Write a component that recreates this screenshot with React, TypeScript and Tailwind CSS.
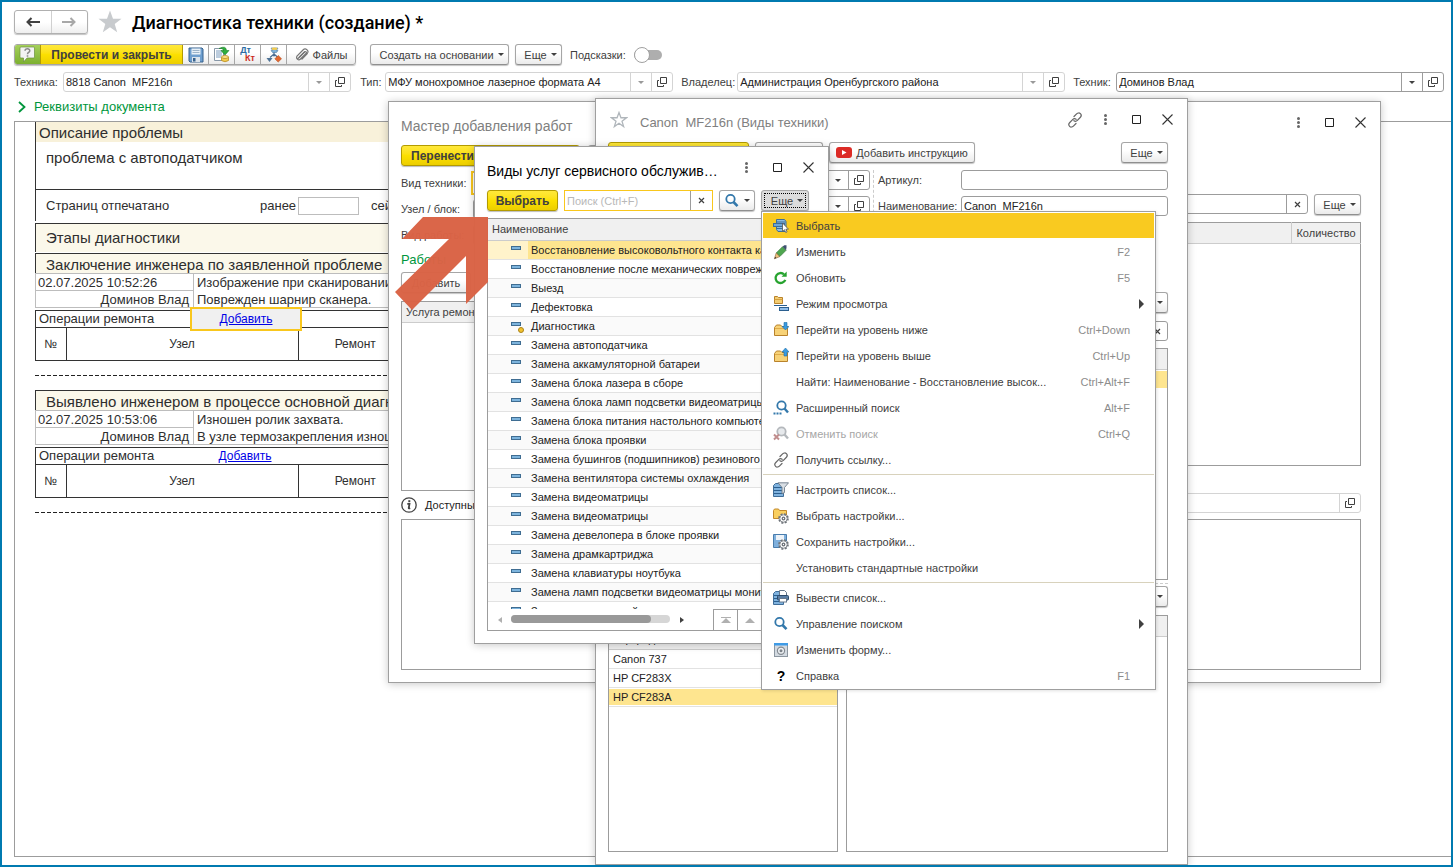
import type { ReactNode } from "react";

/* ---------- icons ---------- */

function OpenIcon() {
  return (
    <svg width="10" height="10" viewBox="0 0 10 10" fill="none" stroke="currentColor">
      <path d="M3.5 .5h6v6h-6z" />
      <path d="M2 3.5H.5v6h6V8" />
    </svg>
  );
}

function CaretIcon() {
  return (
    <svg width="6" height="3" viewBox="0 0 6 3" fill="currentColor">
      <path d="M0 0h6L3 3z" />
    </svg>
  );
}

function ClearIcon() {
  return (
    <svg width="7" height="7" viewBox="0 0 7 7" stroke="currentColor" strokeWidth="1.2">
      <path d="M1 1l5 5M6 1L1 6" />
    </svg>
  );
}

function CloseIcon() {
  return (
    <svg width="11" height="11" viewBox="0 0 11 11" stroke="#333" strokeWidth="1.1">
      <path d="M.5 .5l10 10M10.5 .5l-10 10" />
    </svg>
  );
}

function SquareIcon() {
  return (
    <svg width="10" height="10" viewBox="0 0 10 10" fill="none" stroke="#222">
      <path d="M.5 .5h8v8h-8z" />
    </svg>
  );
}

function DotsIcon() {
  return (
    <svg width="3" height="11" viewBox="0 0 3 11" fill="#666">
      <circle cx="1.5" cy="1.5" r="1.5" />
      <circle cx="1.5" cy="5.5" r="1.5" />
      <circle cx="1.5" cy="9.5" r="1.5" />
    </svg>
  );
}

function LinkIcon() {
  return (
    <svg width="16" height="16" viewBox="0 0 16 16" fill="none" stroke="#666" strokeWidth="1.2" strokeLinecap="round">
      <path d="M7 4.500l2.600-2.600c1.200-1.200 2.800-1.200 3.800-.2s1 2.600-.2 3.800L10.400 8.300c-1.100 1.100-2.400 1.200-3.500.4" />
      <path d="M9 11.500l-2.600 2.600c-1.200 1.200-2.800 1.200-3.800.2s-1-2.600.2-3.800L5.600 7.700c1.100-1.100 2.400-1.200 3.500-.4" />
    </svg>
  );
}

function SearchIcon() {
  return (
    <svg width="16" height="16" viewBox="0 0 16 16" fill="none" stroke="#3378ab">
      <circle cx="6.5" cy="6" r="4.2" strokeWidth="1.8" />
      <path d="M9.500 9l4 4.200" strokeWidth="2.600" />
    </svg>
  );
}

function AdvancedSearchIcon() {
  return (
    <svg width="16" height="16" viewBox="0 0 16 16" fill="none" stroke="#3378ab">
      <circle cx="8.500" cy="5.500" r="4.200" strokeWidth="1.800" />
      <path d="M11.500 8.500l3.500 4" strokeWidth="2.400" />
      <path d="M.5 13.500h8" strokeWidth="2" strokeDasharray="2 1" />
    </svg>
  );
}

function CancelSearchIcon() {
  return (
    <svg width="16" height="16" viewBox="0 0 16 16" fill="none" stroke="#b4b8bc">
      <circle cx="8.500" cy="5.500" r="4.200" strokeWidth="1.800" fill="#e6e9ec" />
      <path d="M11.500 8.500l3.500 4" strokeWidth="2.400" />
      <path d="M1 8.500l5 5M6 8.500l-5 5" stroke="#c08d8d" strokeWidth="2" />
    </svg>
  );
}

function ListLines() {
  return (
    <>
      <path d="M.5 3.500l2-2h8v13H.5z" fill="#7fb2de" stroke="#3f6d98" />
      <path d="M1 5.500h9M1 8.500h9M1 11.500h9" stroke="#2b5f8f" fill="none" />
    </>
  );
}

function SelectIcon() {
  return (
    <svg width="16" height="16" viewBox="0 0 16 16">
      <path d="M3.500 1.500h8l1.500 2v10H5l-1.500-2z" fill="#8dbbe2" stroke="#3d6d98" />
      <path d="M3.500 4h9M3.500 10.500h9" stroke="#3d6d98" />
      <rect x=".5" y="5.500" width="11" height="3" fill="#6ea6d8" stroke="#3d6d98" />
      <path d="M9.500 5v8.500l2-1.800 1.200 2.800 1.400-.6-1.200-2.700h2.600z" fill="#fff" stroke="#555" strokeWidth=".8" />
    </svg>
  );
}

function PencilIcon() {
  return (
    <svg width="16" height="16" viewBox="0 0 16 16">
      <path d="M3.200 9L9.500 2.700l3.600 3.600L6.800 12.600z" fill="#4fa64f" stroke="#2f6f35" strokeWidth=".6" />
      <path d="M9.500 2.700l1.800-1.500h2.200v2.300l-.4 2.800z" fill="#3f5170" />
      <path d="M3.200 9l3.600 3.600L1.400 14.800z" fill="#edc07c" stroke="#8a6232" strokeWidth=".6" />
      <path d="M1.400 14.800l.8-2 1.200 1.200z" fill="#333" />
    </svg>
  );
}

function RefreshIcon() {
  return (
    <svg width="16" height="16" viewBox="0 0 16 16" fill="none">
      <path d="M12.300 9.800a5 5 0 1 1-1.300-5.500" stroke="#27a32f" strokeWidth="2.300" />
      <path d="M13.700 1.500v5.200H8.500z" fill="#27a32f" />
    </svg>
  );
}

function ViewModeIcon() {
  return (
    <svg width="16" height="16" viewBox="0 0 16 16">
      <path d="M1.500 .5h3l1 1h4v6h-8z" fill="#f3cd72" stroke="#b9822b" />
      <path d="M1.500 3.500h8" stroke="#d6a040" />
      <path d="M1 9.500h13" stroke="#2b5f8f" />
      <rect x="6.500" y="11.500" width="9" height="3" fill="#8fbdea" stroke="#2b5f8f" />
    </svg>
  );
}

function LevelIcon({ up = false }: { up?: boolean }) {
  return (
    <svg width="16" height="16" viewBox="0 0 16 16">
      <path d="M1.500 5.500l2-2.500h4l1.500 1.500h5.500v9h-13z" fill="#f7d277" stroke="#b9822b" />
      <path d="M2 6.500h12" stroke="#e0ac4a" />
      {up ? (
        <path d="M12.500 0l3.500 4h-2v4h-3V4H9z" fill="#3b9be0" stroke="#1f6ea8" strokeWidth=".6" />
      ) : (
        <path d="M12.500 8L9 4.500h2V.5h3v4h2z" fill="#3b9be0" stroke="#1f6ea8" strokeWidth=".6" />
      )}
    </svg>
  );
}

function FilterIcon() {
  return (
    <svg width="16" height="16" viewBox="0 0 16 16">
      <ListLines />
      <path d="M5 .8h10.500l-4 4.700v5l-2.500 1.200V5.500z" fill="#d8dee4" stroke="#6f7d8a" strokeWidth=".9" />
    </svg>
  );
}

function Gear() {
  return (
    <g fill="#fff" stroke="#6d7278">
      <circle cx="10.500" cy="10.500" r="4.400" strokeWidth="1.800" strokeDasharray="2 1.450" />
      <circle cx="10.500" cy="10.500" r="3.700" strokeWidth=".8" />
      <circle cx="10.500" cy="10.500" r="1.300" strokeWidth="1.300" />
    </g>
  );
}

function ChooseSettingsIcon() {
  return (
    <svg width="16" height="16" viewBox="0 0 16 16">
      <path d="M.5 2.500l1-1.500h4l1 1.500h7v8H.5z" fill="#f9cf5f" stroke="#c3892a" />
      <Gear />
    </svg>
  );
}

function SaveSettingsIcon() {
  return (
    <svg width="16" height="16" viewBox="0 0 16 16">
      <path d="M.5 .5h13v13H.5z" fill="#7fb0dd" stroke="#4a7dad" />
      <path d="M3 1h8v5H3z" fill="#eef3f8" />
      <Gear />
    </svg>
  );
}

function PrintListIcon() {
  return (
    <svg width="16" height="16" viewBox="0 0 16 16">
      <ListLines />
      <path d="M6.500 .5h5l2 2v4h-7z" fill="#fff" stroke="#66788c" />
      <rect x="4.500" y="5.500" width="11" height="4.500" rx="1" fill="#5b7fa6" stroke="#2c4a6b" />
      <rect x="6.500" y="8.500" width="7" height="3.500" fill="#fff" stroke="#66788c" />
    </svg>
  );
}

function EditFormIcon() {
  return (
    <svg width="16" height="16" viewBox="0 0 16 16">
      <rect x="1.500" y="1.500" width="13" height="13" fill="#d3dae1" stroke="#8c96a0" />
      <path d="M1 1h14v2.500H1z" fill="#3f9be6" />
      <circle cx="8" cy="8.800" r="3.600" fill="#eef1f4" stroke="#848b92" strokeWidth="1.200" />
      <circle cx="8" cy="8.800" r="1.500" fill="#7b8289" />
    </svg>
  );
}

function HelpIcon() {
  return (
    <svg width="17" height="17" viewBox="0 0 17 17">
      <path d="M2 1h12.500q1 0 1 1v9q0 1-1 1H8l-3.500 4V12H2q-1 0-1-1V2q0-1 1-1z" fill="#f3f3f3" stroke="#6c8f3d" strokeWidth=".7" />
      <path d="M6 4.800c.2-2.600 5-2.600 4.800.1-.1 1.600-2.300 1.600-2.300 3.300" fill="none" stroke="#8a8a8a" strokeWidth="1.500" />
      <path d="M7.700 9.200h1.600v1.500H7.700z" fill="#8a8a8a" />
    </svg>
  );
}

function FloppyIcon() {
  return (
    <svg width="16" height="16" viewBox="0 0 16 16">
      <path d="M1 1h13l1 1v13H2l-1-1z" fill="#6f9fcf" stroke="#37618c" />
      <path d="M3.500 1.500h9v6h-9z" fill="#e9f1f8" />
      <path d="M4.500 3.500h7M4.500 5.500h7" stroke="#9db4ca" />
      <path d="M4 10h8v5H4z" fill="#dce4ec" />
      <path d="M5 11h2.500v3.500H5z" fill="#37618c" />
    </svg>
  );
}

function PostIcon() {
  return (
    <svg width="17" height="17" viewBox="0 0 17 17">
      <path d="M1.500 2.500h9v12h-9z" fill="#fff" stroke="#8898a8" />
      <path d="M3 5h6M3 7h6M3 9h6M3 11h5" stroke="#7a9bbd" />
      <path d="M6 2.500q7-3.500 7.500 2h2.500l-4 4.500-4-4.500h2.500q-.5-3-4.500-2z" fill="#2fae3c" stroke="#1c7d28" strokeWidth=".6" />
      <path d="M8.500 11v3.500q3.500 2.500 7 0V11" fill="#f3cb4e" stroke="#b98c22" strokeWidth=".8" />
      <ellipse cx="12" cy="11" rx="3.500" ry="1.500" fill="#fbe18a" stroke="#b98c22" strokeWidth=".8" />
    </svg>
  );
}

function StructureIcon() {
  return (
    <svg width="16" height="16" viewBox="0 0 16 16">
      <path d="M8 5v4.500M8 7l-4 3.500M8 7l4 3.500" stroke="#4d6f94" strokeWidth="1.200" fill="none" />
      <path d="M5 1h7l-1.500 2.500H12l-1.500 2h-4L5 3.500h1.500z" fill="#7eb1da" stroke="#4d7ba5" strokeWidth=".6" />
      <ellipse cx="8.500" cy="1.700" rx="3" ry="1.200" fill="#f3cb4e" />
      <path d="M.5 11h6L3.500 15z" fill="#4f7396" />
      <path d="M12.200 8.500l3.300 3.300-3.300 3.300-3.300-3.300z" fill="#e2672f" stroke="#b2481a" strokeWidth=".6" />
    </svg>
  );
}

function ClipIcon() {
  return (
    <svg width="14" height="14" viewBox="0 0 14 14" fill="none" stroke="#777" strokeWidth="1.200" strokeLinecap="round">
      <path d="M3 10.500l6.500-6.500c1.200-1.200 2.700.3 1.500 1.500L5.500 11c-1.800 1.800-5 0-3.500-3L8 2c2.500-2.500 6.500.5 4.300 3.500L7 11" />
      <path d="M4.500 9L9.500 4" />
    </svg>
  );
}

function StarShape({ filled = false }: { filled?: boolean }) {
  return filled ? (
    <svg width="24" height="24" viewBox="0 0 24 24" fill="#c8cbce">
      <path d="M12 .5l3 8.200h8.500l-6.800 5.200 2.500 8.400-7.200-5-7.200 5 2.500-8.400L.5 8.700H9z" />
    </svg>
  ) : (
    <svg width="18" height="18" viewBox="0 0 24 24" fill="none" stroke="#b0b6bb" strokeWidth="1.700">
      <path d="M12 2l2.600 7h7.400l-6 4.500 2.200 7.300-6.200-4.400-6.200 4.400 2.200-7.300L2 9h7.400z" />
    </svg>
  );
}

function ItemMark({ dotted = false }: { dotted?: boolean }) {
  return (
    <svg width="14" height="12" viewBox="0 0 14 12">
      <rect x=".5" y=".5" width="9" height="3" fill="#7db4dd" stroke="#3f6d92" />
      {dotted && <circle cx="10" cy="8" r="2.500" fill="#f2c22e" stroke="#a9831b" />}
    </svg>
  );
}

/* ---------- controls ---------- */

const plainButton =
  "flex h-[21px] shrink-0 items-center justify-center gap-1 rounded-[3px] border border-[#a6a6a6] border-b-[#8f8f8f] bg-linear-to-b from-white from-40% to-[#ebebeb] text-[#404040] shadow-[0_1px_1px_#c4c4c4] whitespace-nowrap";

const yellowButton =
  "flex h-[21px] shrink-0 items-center overflow-hidden rounded-[3px] border border-[#b39b00] bg-linear-to-b from-[#ffe83a] via-[#fce000] to-[#ecce00] text-xs font-bold text-[#404040] shadow-[0_1px_1px_#bdbdbd] whitespace-nowrap";

function MoreButton() {
  return (
    <button className={`${plainButton} w-[47px] pl-1`}>
      Еще <CaretIcon />
    </button>
  );
}

const fieldActions = {
  drop: { label: "Выбрать из списка", icon: <CaretIcon /> },
  open: { label: "Открыть", icon: <OpenIcon /> },
  clear: { label: "Очистить", icon: <ClearIcon /> },
};

type FieldProps = {
  id: string;
  value?: string;
  label?: string;
  actions?: (keyof typeof fieldActions)[];
  muted?: boolean;
  className?: string;
};

function Field({ id, value = "", label, actions = [], muted = false, className = "" }: FieldProps) {
  const line = muted ? "border-[#d4d4d4]" : "border-[#9c9c9c]";
  return (
    <div className={`flex h-5 min-w-0 rounded-[3px] border bg-white ${line} ${className}`}>
      <input
        id={id}
        aria-label={label}
        defaultValue={value}
        className="w-full min-w-0 flex-1 bg-transparent px-0.5 text-[#222] outline-none"
      />
      {actions.map((name) => (
        <button
          key={name}
          aria-label={fieldActions[name].label}
          className={`flex w-[21px] shrink-0 items-center justify-center border-l ${line} ${muted && name === "drop" ? "text-[#999]" : "text-[#404040]"}`}
        >
          {fieldActions[name].icon}
        </button>
      ))}
    </div>
  );
}

type WindowProps = {
  title: string;
  active?: boolean;
  star?: boolean;
  link?: boolean;
  className: string;
  children: ReactNode;
};

function Window({ title, active = false, star = false, link = false, className, children }: WindowProps) {
  return (
    <section className={`absolute flex flex-col border border-[#9f9f9f] bg-white shadow-[0_1px_8px_rgba(0,0,0,0.22)] ${className}`}>
      <header className="mb-0.5 flex h-[41px] shrink-0 items-center pr-1 pl-3">
        {star && (
          <button aria-label="В избранное" className="mr-3 ml-0.5 w-[18px]">
            <StarShape />
          </button>
        )}
        <h2
          className={`min-w-0 flex-1 pt-1.5 whitespace-pre ${star ? "text-[13px]" : "text-sm"} ${active ? "text-black" : "text-[#808080]"}`}
        >
          {title}
        </h2>
        {link && (
          <button aria-label="Получить ссылку" className="flex h-6 w-[31px] items-center justify-center">
            <LinkIcon />
          </button>
        )}
        <button aria-label="Меню окна" className="flex h-6 w-[31px] items-center justify-center">
          <DotsIcon />
        </button>
        <button aria-label="Развернуть" className="flex h-6 w-[31px] items-center justify-center">
          <SquareIcon />
        </button>
        <button aria-label="Закрыть" className="flex h-6 w-[31px] items-center justify-center">
          <CloseIcon />
        </button>
      </header>
      {children}
    </section>
  );
}

/* ---------- main form ---------- */

function TitleRow() {
  return (
    <div className="flex h-6 items-center">
      <div className="flex h-6 w-[74px] rounded-[3px] border border-[#b0b0b0] bg-linear-to-b from-white from-50% to-[#efefef] shadow-[0_1px_1px_#c4c4c4]">
        <button aria-label="Назад" className="flex flex-1 items-center justify-center border-r border-[#d0d0d0]">
          <svg width="14" height="10" viewBox="0 0 14 10" fill="none" stroke="#404040" strokeWidth="2">
            <path d="M14 5H2M5.500 1L1.500 5l4 4" />
          </svg>
        </button>
        <button aria-label="Вперед" className="flex flex-1 items-center justify-center">
          <svg width="14" height="10" viewBox="0 0 14 10" fill="none" stroke="#a8a8a8" strokeWidth="2">
            <path d="M0 5h12M8.500 1l4 4-4 4" />
          </svg>
        </button>
      </div>
      <button aria-label="В избранное" className="mr-2.5 ml-2.5">
        <StarShape filled />
      </button>
      <h1 className="pt-0.5 font-[Roboto,sans-serif] text-lg leading-5 font-medium text-black">Диагностика техники (создание) *</h1>
    </div>
  );
}

function Toolbar() {
  const iconButton = "flex w-[26px] items-center justify-center border-l border-[#a6a6a6]";
  return (
    <div className="mt-2.5 flex h-[21px] items-center">
      <div className="flex h-[21px] overflow-hidden rounded-[3px] border border-[#a6a6a6] bg-linear-to-b from-white from-40% to-[#ebebeb] text-[#404040] shadow-[0_1px_1px_#c4c4c4]">
        <button aria-label="Справка" className="flex w-[25px] items-center justify-center bg-linear-to-b from-[#a5d05a] to-[#7cb030]">
          <HelpIcon />
        </button>
        <button className="w-[143px] border border-y-0 border-[#b39b00] bg-linear-to-b from-[#ffe83a] via-[#fce000] to-[#ecce00] text-xs font-bold">
          Провести и закрыть
        </button>
        <button aria-label="Записать" className="flex w-[25px] items-center justify-center">
          <FloppyIcon />
        </button>
        <button aria-label="Провести" className={iconButton}>
          <PostIcon />
        </button>
        <button aria-label="Движения документа" className={`${iconButton} text-[9px] leading-[9px] font-bold`}>
          <span className="pb-2 text-[#2b6ca3]">Дт</span>
          <span className="-ml-1.5 pt-2 text-[#cc2a1e]">Кт</span>
        </button>
        <button aria-label="Структура подчиненности" className={iconButton}>
          <StructureIcon />
        </button>
        <button className="flex w-[69px] items-center justify-center gap-1 border-l border-[#a6a6a6]">
          <ClipIcon /> Файлы
        </button>
      </div>
      <button className={`${plainButton} ml-3.5 w-[139px] pl-1`}>
        Создать на основании <CaretIcon />
      </button>
      <div className="ml-1.5">
        <MoreButton />
      </div>
      <label htmlFor="hints" className="ml-2 text-[#404040]">
        Подсказки:
      </label>
      <span className="relative ml-2 flex h-4 w-7 items-center">
        <input id="hints" type="checkbox" role="switch" className="h-2.5 w-full appearance-none rounded-full bg-[#aeaeae]" />
        <span className="pointer-events-none absolute left-0 size-4 rounded-full border border-[#a0a0a0] bg-white" />
      </span>
    </div>
  );
}

function RequisiteRow() {
  return (
    <div className="mt-[7px] flex items-center pr-[7px] text-[#404040]">
      <label htmlFor="device" className="w-[49px] shrink-0">Техника:</label>
      <Field id="device" value="8818 Canon  MF216n" actions={["drop", "open"]} muted className="flex-[288]" />
      <label htmlFor="kind" className="ml-[9px] w-[25px] shrink-0">Тип:</label>
      <Field id="kind" value="МФУ монохромное лазерное формата А4" actions={["drop", "open"]} muted className="flex-[288]" />
      <label htmlFor="owner" className="ml-2 w-14 shrink-0">Владелец:</label>
      <Field id="owner" value="Администрация Оренбургского района" actions={["drop", "open"]} muted className="flex-[328]" />
      <label htmlFor="engineer" className="ml-2 w-[43px] shrink-0">Техник:</label>
      <Field id="engineer" value="Доминов Влад" actions={["drop", "open"]} className="flex-[328]" />
    </div>
  );
}

type Stage = { title: string; time: string; author: string; notes: string[]; focused?: boolean };

const stages: Stage[] = [
  {
    title: "Заключение инженера по заявленной проблеме",
    time: "02.07.2025 10:52:26",
    author: "Доминов Влад",
    notes: ["Изображение при сканировании", "Поврежден шарнир сканера."],
    focused: true,
  },
  {
    title: "Выявлено инженером в процессе основной диагностики",
    time: "02.07.2025 10:53:06",
    author: "Доминов Влад",
    notes: ["Изношен ролик захвата.", "В узле термозакрепления изношена пленка."],
  },
];

function StageBlock({ title, time, author, notes, focused = false }: Stage) {
  return (
    <div className="h-[137px]">
      <h3 className="h-5 border-t border-l border-[#333] bg-[#fbf8ea] pl-2.5 text-[15px] leading-[22px]">{title}</h3>
      <div className="flex h-[35px] border-y border-l border-[#bdbdbd] text-[13px]">
        <div className="w-[158px] border-r border-[#bdbdbd]">
          <p className="h-[17px] border-b border-[#bdbdbd] pl-0.5 leading-[17px]">{time}</p>
          <p className="pr-1 text-right leading-[17px]">{author}</p>
        </div>
        <div className="pl-[3px] leading-[17px]">
          {notes.map((note) => (
            <p key={note}>{note}</p>
          ))}
        </div>
      </div>
      <div className="mt-0.5 border border-[#333]">
        <div className="relative flex h-[17px] items-center border-b border-[#333] text-[13px]">
          <span className="w-[155px] pl-[3px]">Операции ремонта</span>
          <span
            className={
              focused
                ? "absolute -top-1 left-[154px] flex h-6 w-28 items-center justify-center border-2 border-[#f9c71d] bg-[#f0f0f0]"
                : "flex w-[108px] justify-center"
            }
          >
            <a href="#add" className="text-xs text-[#0000e6] underline">Добавить</a>
          </span>
        </div>
        <table className="w-full table-fixed text-xs">
          <thead>
            <tr className="h-8">
              <th className="w-[30px] border-r border-[#333] font-normal">№</th>
              <th className="w-[232px] border-r border-[#333] font-normal">Узел</th>
              <th className="w-[114px] font-normal">Ремонт</th>
              <th />
            </tr>
          </thead>
        </table>
      </div>
      <svg className="mt-3.5 h-px w-full" preserveAspectRatio="none">
        <path d="M0 .5h640" stroke="#222" strokeDasharray="4 2" />
      </svg>
    </div>
  );
}

function DocumentSheet() {
  return (
    <main className="flex-1 overflow-hidden border border-r-0 border-[#9c9c9c] pl-5 text-[#2e2e2e]">
      <div className="w-[620px]">
        <div className="border-l border-[#333]">
          <h3 className="h-5 bg-[#f8f1da] pl-[3px] text-[15px] leading-[21px]">Описание проблемы</h3>
          <p className="h-12 border-b border-[#333] pt-1.5 pl-2.5 text-[15px] leading-5">проблема с автоподатчиком</p>
          <div className="flex h-[31px] items-center pl-2.5 text-[13px]">
            <span className="w-[214px]">Страниц отпечатано</span>
            <label htmlFor="pages" className="w-[38px]">ранее</label>
            <input id="pages" className="h-[18px] w-[61px] border border-[#bdbdbd]" />
            <span className="pl-3">сейчас</span>
          </div>
        </div>
        <h3 className="mt-0.5 h-[29px] border-t border-l border-[#333] bg-[#fbf8ea] pl-2.5 text-[15px] leading-7">Этапы диагностики</h3>
        <div className="mt-px">
          {stages.map((stage) => (
            <StageBlock key={stage.title} {...stage} />
          ))}
        </div>
      </div>
    </main>
  );
}

/* ---------- windows ---------- */

function WorksWizard() {
  return (
    <Window title="Мастер добавления работ" className="top-[99px] left-[386px] h-[582px] w-[993px]">
      <div className="flex min-h-0 flex-1 flex-col pr-[19px] pb-3 pl-3">
        <div className="flex gap-2">
          <button className={`${yellowButton} w-[179px] pl-[9px]`}>Перенести в документ</button>
          <button className={`${plainButton} w-20`}>Закрыть</button>
        </div>
        <div className="grid h-[325px] grid-cols-2 gap-3">
          <div className="flex flex-col pt-1 text-[#404040]">
            <div className="flex h-[26px] items-center">
              <label htmlFor="work-device" className="w-[70px] shrink-0">Вид техники:</label>
              <input id="work-device" className="h-6 w-full border-2 border-[#f9c71d] outline-none" />
            </div>
            <div className="flex h-[26px] items-center">
              <label htmlFor="work-unit" className="w-[72px] shrink-0">Узел / блок:</label>
              <Field id="work-unit" actions={["drop"]} className="flex-1" />
            </div>
            <div className="flex h-[26px] items-center">
              <label htmlFor="work-type" className="w-[72px] shrink-0">Вид работы:</label>
              <Field id="work-type" actions={["drop"]} className="flex-1" />
            </div>
            <h3 className="h-6 pt-0.5 text-[13px] leading-5 text-[#00963c]">Работы</h3>
            <button className={`${plainButton} w-[70px]`}>Добавить</button>
            <div className="mt-2 flex-1 border border-[#9c9c9c]">
              <div className="h-[21px] border-b border-[#ccc] bg-[#f0f0f0] pl-1 leading-5">Услуга ремонта</div>
            </div>
          </div>
          <div className="pt-7">
            <div className="flex gap-1.5">
              <Field id="parts-search" label="Поиск" actions={["clear"]} className="flex-1" />
              <MoreButton />
            </div>
            <table className="mt-[7px] h-[244px] w-full border border-[#9c9c9c] text-[#404040]">
              <thead>
                <tr className="h-[21px] border-b border-[#ccc] bg-[#f0f0f0]">
                  <th className="border-r border-[#ccc] pl-1 text-left font-normal">Запчасть</th>
                  <th className="w-[69px] font-normal">Количество</th>
                </tr>
              </thead>
              <tbody>
                <tr>
                  <td colSpan={2} />
                </tr>
              </tbody>
            </table>
          </div>
        </div>
        <div className="flex h-7 items-center gap-2 text-[#222]">
          <svg width="16" height="16" viewBox="0 0 16 16" fill="none" stroke="#444" strokeWidth="1.300">
            <circle cx="8" cy="8" r="7.200" />
            <path d="M6.300 6.800h2.200l-.8 4.200q0 .8 1.500.2" strokeWidth="1.800" />
            <path d="M8.300 3.200v2" strokeWidth="2" />
          </svg>
          <label htmlFor="parts">Доступные запчасти:</label>
          <Field id="parts" actions={["open"]} muted className="mb-1 flex-1" />
        </div>
        <div className="flex-1 border border-[#9c9c9c]" />
      </div>
    </Window>
  );
}

const cartridges = ["Canon 737", "HP CF283X", "HP CF283A"];

function DeviceWindow() {
  return (
    <Window title="Canon  MF216n (Виды техники)" star link className="top-24 left-[593px] h-[767px] w-[593px]">
      <div className="flex min-h-0 flex-1 flex-col pr-[19px] pb-3 pl-3 text-[#404040]">
        <div className="flex gap-1.5">
          <button className={`${yellowButton} w-[141px] justify-center`}>Записать и закрыть</button>
          <button className={`${plainButton} w-[68px]`}>Записать</button>
          <button className={`${plainButton} mr-auto w-[146px]`}>
            <svg width="16" height="11" viewBox="0 0 16 11">
              <rect width="16" height="11" rx="3" fill="#dc2b26" />
              <path d="M6 3v5l4.500-2.500z" fill="#fff" />
            </svg>
            Добавить инструкцию
          </button>
          <MoreButton />
        </div>
        <div className="mt-[7px] flex h-[122px]">
          <div className="flex w-[266px] flex-col gap-1.5 border-r border-dashed border-[#ccc] pr-[3px]">
            <Field id="group" label="Группа" actions={["drop", "open"]} />
            <Field id="type" label="Тип" actions={["drop", "open"]} />
          </div>
          <div className="flex flex-1 flex-col gap-1.5 pl-1">
            <div className="flex items-center">
              <label htmlFor="article" className="w-[83px]">Артикул:</label>
              <Field id="article" className="flex-1" />
            </div>
            <div className="flex items-center">
              <label htmlFor="name" className="w-[83px]">Наименование:</label>
              <Field id="name" value="Canon  MF216n" className="flex-1" />
            </div>
          </div>
        </div>
        <div className="flex justify-end">
          <MoreButton />
        </div>
        <Field id="unit-search" label="Поиск" actions={["clear"]} className="mt-2" />
        <div className="mt-[7px] h-[232px] border border-[#9c9c9c]">
          <div className="h-[21px] border-b border-[#ccc] bg-[#f0f0f0]" />
          <div className="mt-px h-[17px] bg-[#fee58f]" />
        </div>
        <div className="h-1 border-b border-dashed border-[#ccc]" />
        <div className="mt-0.5 flex justify-end">
          <MoreButton />
        </div>
        <div className="mt-2 flex min-h-0 flex-1 gap-2">
          <div className="mt-[13px] w-[230px] border border-[#9c9c9c] text-[#222]">
            <div className="h-[21px] border-b border-[#ccc] bg-[#f0f0f0] pl-1 leading-5">Картридж</div>
            <ul>
              {cartridges.map((name, i) => (
                <li key={name} className="h-[19px] border-b border-[#e2e2e2] pt-px leading-[17px]">
                  <span className={`block h-4 pl-1 ${i === 2 ? "bg-[#fee58f]" : ""}`}>{name}</span>
                </li>
              ))}
            </ul>
          </div>
          <div className="flex-1 border border-[#9c9c9c]">
            <div className="h-[21px] border-b border-[#ccc] bg-[#f0f0f0]" />
          </div>
        </div>
      </div>
    </Window>
  );
}

const services = [
  "Восстановление высоковольтного контакта картриджа",
  "Восстановление после механических повреждений",
  "Выезд",
  "Дефектовка",
  "Диагностика",
  "Замена автоподатчика",
  "Замена аккамуляторной батареи",
  "Замена блока лазера в сборе",
  "Замена блока ламп подсветки видеоматрицы",
  "Замена блока питания настольного компьютера",
  "Замена блока проявки",
  "Замена бушингов (подшипников) резинового вала",
  "Замена вентилятора системы охлаждения",
  "Замена видеоматрицы",
  "Замена видеоматрицы",
  "Замена девелопера в блоке проявки",
  "Замена драмкартриджа",
  "Замена клавиатуры ноутбука",
  "Замена ламп подсветки видеоматрицы монитора",
  "Замена материнской платы",
];

const scrollButtons = [
  ["M0 0h10v1H0zM5 1l5 5H0z", "M5 1l5 5H0z"],
  ["M5 6l5-5H0z", "M0 6h10v1H0zM5 6l5-5H0z"],
];

function ServicePicker() {
  return (
    <Window title="Виды услуг сервисного обслужив…" active className="top-36 left-[472px] h-[498px] w-[355px]">
      <div className="flex min-h-0 flex-1 flex-col px-3 pb-3">
        <div className="flex gap-1.5">
          <button className={`${yellowButton} w-[71px] justify-center`}>Выбрать</button>
          <div className="flex h-[21px] w-[149px] border border-[#f9c71d]">
            <input
              aria-label="Поиск"
              placeholder="Поиск (Ctrl+F)"
              className="min-w-0 flex-1 px-0.5 outline-none placeholder:text-[#b8b8b8]"
            />
            <button aria-label="Очистить" className="flex w-[22px] items-center justify-center border-l border-[#9c9c9c] text-[#404040]">
              <ClearIcon />
            </button>
          </div>
          <button aria-label="Найти" className={`${plainButton} w-9`}>
            <SearchIcon />
            <CaretIcon />
          </button>
          <button className="flex h-[21px] w-12 rounded-[3px] border border-[#a6a6a6] bg-[#dcdcdc] p-0.5 text-[#404040] shadow-[0_1px_1px_#c4c4c4]">
            <span className="flex h-full flex-1 items-center justify-center gap-1 border border-dotted border-black pl-1">
              Еще <CaretIcon />
            </span>
          </button>
        </div>
        <div className="mt-[7px] flex min-h-0 flex-1 flex-col border border-[#9c9c9c]">
          <div className="min-h-0 flex-1 overflow-hidden">
            <table className="w-full table-fixed">
              <thead>
                <tr className="h-[21px] border-b border-[#ccc] bg-[#f0f0f0]">
                  <th className="pl-1 text-left font-normal text-[#404040]">Наименование</th>
                </tr>
              </thead>
              <tbody className="text-[#222]">
                {services.map((name, i) => (
                  <tr key={i} className={`h-[19px] border-b border-[#e2e2e2] ${i === 0 ? "bg-[#fff3cb]" : i % 2 === 0 ? "bg-[#fafafa]" : ""}`}>
                    <td className="p-0">
                      <div className="flex h-[18px] items-center pl-[23px]">
                        <span className="w-[17px] pt-1">
                          <ItemMark dotted={i === 4} />
                        </span>
                        <span className={`flex-1 overflow-hidden pl-[3px] leading-[18px] whitespace-nowrap ${i === 0 ? "bg-[#fee58f]" : ""}`}>{name}</span>
                      </div>
                    </td>
                  </tr>
                ))}
              </tbody>
            </table>
          </div>
          <div className="flex h-[21px] shrink-0 items-center">
            <svg className="ml-2.5" width="4" height="6" viewBox="0 0 4 6" fill="#b0b0b0">
              <path d="M4 0v6L0 3z" />
            </svg>
            <div className="mb-0.5 ml-[9px] h-2 w-[159px] rounded-full bg-[#d6d6d6]">
              <div className="h-2 w-[140px] rounded-full bg-[#999]" />
            </div>
            <svg className="ml-2.5" width="4" height="6" viewBox="0 0 4 6" fill="#404040">
              <path d="M0 0v6l4-3z" />
            </svg>
            <div className="ml-auto flex gap-1">
              {scrollButtons.map((pair, n) => (
                <div key={n} className="flex h-[21px] border-t border-r border-[#9c9c9c]">
                  {pair.map((d) => (
                    <button key={d} aria-label="Листать" className="flex w-6 items-center justify-center border-l border-[#9c9c9c]">
                      <svg width="10" height="7" viewBox="0 0 10 7" fill="#b0b0b0">
                        <path d={d} />
                      </svg>
                    </button>
                  ))}
                </div>
              ))}
            </div>
          </div>
        </div>
      </div>
    </Window>
  );
}

/* ---------- context menu ---------- */

type MenuItem = { label: string; icon?: ReactNode; keys?: string; sub?: boolean; disabled?: boolean };

const menuGroups: MenuItem[][] = [
  [
    { label: "Выбрать", icon: <SelectIcon /> },
    { label: "Изменить", icon: <PencilIcon />, keys: "F2" },
    { label: "Обновить", icon: <RefreshIcon />, keys: "F5" },
    { label: "Режим просмотра", icon: <ViewModeIcon />, sub: true },
    { label: "Перейти на уровень ниже", icon: <LevelIcon />, keys: "Ctrl+Down" },
    { label: "Перейти на уровень выше", icon: <LevelIcon up />, keys: "Ctrl+Up" },
    { label: "Найти: Наименование - Восстановление высок...", keys: "Ctrl+Alt+F" },
    { label: "Расширенный поиск", icon: <AdvancedSearchIcon />, keys: "Alt+F" },
    { label: "Отменить поиск", icon: <CancelSearchIcon />, keys: "Ctrl+Q", disabled: true },
    { label: "Получить ссылку...", icon: <LinkIcon /> },
  ],
  [
    { label: "Настроить список...", icon: <FilterIcon /> },
    { label: "Выбрать настройки...", icon: <ChooseSettingsIcon /> },
    { label: "Сохранить настройки...", icon: <SaveSettingsIcon /> },
    { label: "Установить стандартные настройки" },
  ],
  [
    { label: "Вывести список...", icon: <PrintListIcon /> },
    { label: "Управление поиском", icon: <SearchIcon />, sub: true },
    { label: "Изменить форму...", icon: <EditFormIcon /> },
    { label: "Справка", icon: <b className="text-sm text-black">?</b>, keys: "F1" },
  ],
];

function MoreMenu() {
  return (
    <div role="menu" className="absolute top-[209px] left-[759px] w-[395px] border border-[#9f9f9f] bg-white px-px pt-px shadow-[1px_1px_3px_rgba(0,0,0,0.12)]">
      {menuGroups.map((group, g) => (
        <div key={g}>
          {g > 0 && <div className="mt-px h-[3px] border-t border-[#d8d2bc]" />}
          {group.map((item, i) => (
            <button
              key={item.label}
              role="menuitem"
              disabled={item.disabled}
              className={`flex h-[26px] w-full items-center border-b border-transparent bg-clip-padding pr-2.5 pl-2.5 text-left ${
                g === 0 && i === 0 ? "bg-[#f9ca20]" : ""
              } ${item.disabled ? "text-[#a6a6a6]" : "text-[#404040]"}`}
            >
              <span className="flex w-4 justify-center">{item.icon}</span>
              <span className="flex-1 pl-[7px]">{item.label}</span>
              <span className={`text-[#8c8c8c] ${item.sub ? "" : "pr-3.5"}`}>
                {item.keys}
                {item.sub && (
                  <svg width="5" height="10" viewBox="0 0 5 10" fill="#404040">
                    <path d="M0 0l5 5-5 5z" />
                  </svg>
                )}
              </span>
            </button>
          ))}
        </div>
      ))}
    </div>
  );
}

function PointerArrow() {
  return (
    <svg className="pointer-events-none absolute top-[215px] left-[393px]" width="93" height="93" viewBox="0 0 93 93" fill="#d96345" fillOpacity=".98">
      <path d="M93 0H28L7 22h47L0 75l17 18 54-54v48l22-22z" />
    </svg>
  );
}

export default function App() {
  return (
    <div className="relative flex h-screen flex-col overflow-hidden border-2 border-[#007ab0] bg-white pt-2 pb-2 pl-3 font-['Liberation_Sans',Arial,sans-serif] text-[11px] leading-[14px]">
      <TitleRow />
      <Toolbar />
      <RequisiteRow />
      <button className="flex h-[29px] shrink-0 items-center gap-2 pl-1 text-[13px] text-[#00963c]">
        <svg width="8" height="12" viewBox="0 0 8 12" fill="none" stroke="currentColor" strokeWidth="1.800">
          <path d="M1 1l5.500 5L1 11" />
        </svg>
        Реквизиты документа
      </button>
      <DocumentSheet />
      <WorksWizard />
      <DeviceWindow />
      <ServicePicker />
      <MoreMenu />
      <PointerArrow />
    </div>
  );
}
